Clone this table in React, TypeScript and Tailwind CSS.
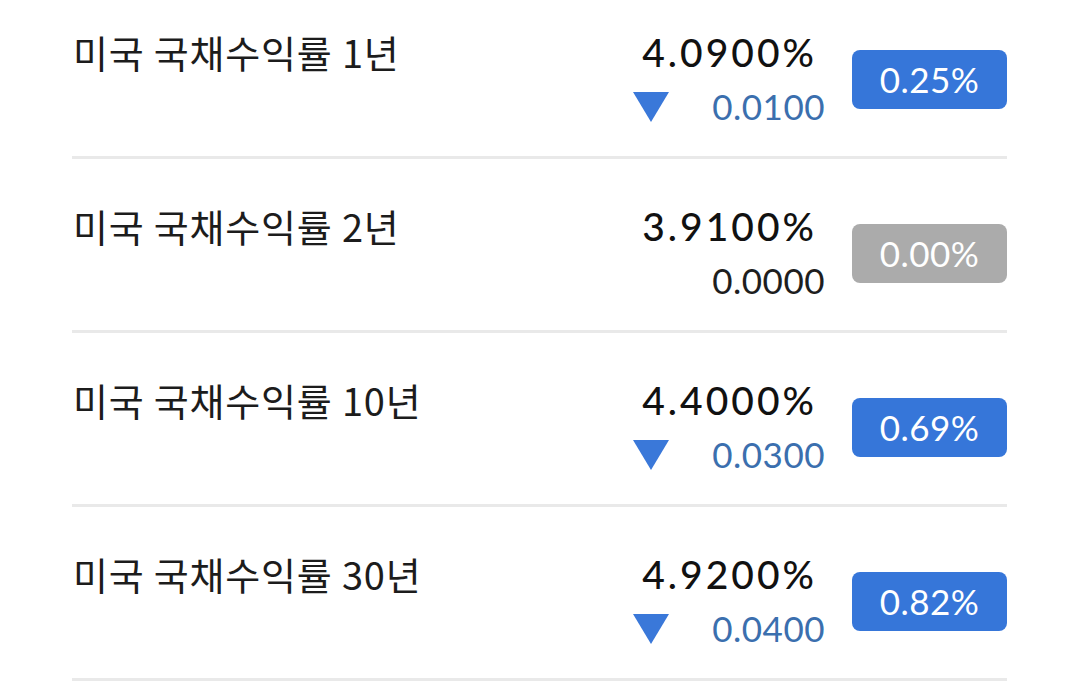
import React from "react";

// Types
interface BondRow {
  name: string;
  price: string;
  change: string;
  rate: string;
  down: boolean;
}

const rows: BondRow[] = [
  { name: "미국 국채수익률 1년", price: "4.0900%", change: "0.0100", rate: "0.25%", down: true },
  { name: "미국 국채수익률 2년", price: "3.9100%", change: "0.0000", rate: "0.00%", down: false },
  { name: "미국 국채수익률 10년", price: "4.4000%", change: "0.0300", rate: "0.69%", down: true },
  { name: "미국 국채수익률 30년", price: "4.9200%", change: "0.0400", rate: "0.82%", down: true },
];

const font = { fontFamily: 'Lato, "Noto Sans CJK KR", sans-serif' };

const DownArrow = () => (
  <svg width="36" height="30" viewBox="0 0 36 30" className="shrink-0 mt-[2px]">
    <polygon points="0,0 36,0 18,30" fill="#3a78d9" />
  </svg>
);

const App = () => {
  return (
    <div className="min-h-screen bg-white overflow-hidden" style={font}>
      <div className="px-[72px] -mt-[15px]">
        {rows.map((r) => (
          <div key={r.name} className="flex items-start justify-between pt-[40px] pb-[23px] border-b-[3px] border-[#e9e9e9]">
            <span
              className="text-[38px] leading-[54px] text-[#1c1c1c] pl-[1px] tracking-[0.8px]"
              style={{ fontFamily: '"Noto Sans CJK KR", Lato, sans-serif' }}
            >
              {r.name}
            </span>
            <div className="flex items-center">
              <div className="w-[192px] flex flex-col">
                <div className="text-right pr-[8px] text-[39px] leading-[54px] tracking-[3px] font-medium text-[#111]">{r.price}</div>
                <div className="flex items-center justify-between h-[54px]">
                  {r.down ? <DownArrow /> : <span />}
                  <span className={`text-[35px] tracking-[0.5px] ${r.down ? "text-[#3b6fae]" : "text-[#1e1e1e]"}`}>{r.change}</span>
                </div>
              </div>
              <div
                className={`ml-[27px] w-[155px] h-[59px] rounded-[8px] flex items-center justify-center text-white text-[35px] tracking-[0.5px] ${
                  r.down ? "bg-[#3676d9]" : "bg-[#ababab]"
                }`}
              >
                {r.rate}
              </div>
            </div>
          </div>
        ))}
      </div>
    </div>
  );
};

export default App;
